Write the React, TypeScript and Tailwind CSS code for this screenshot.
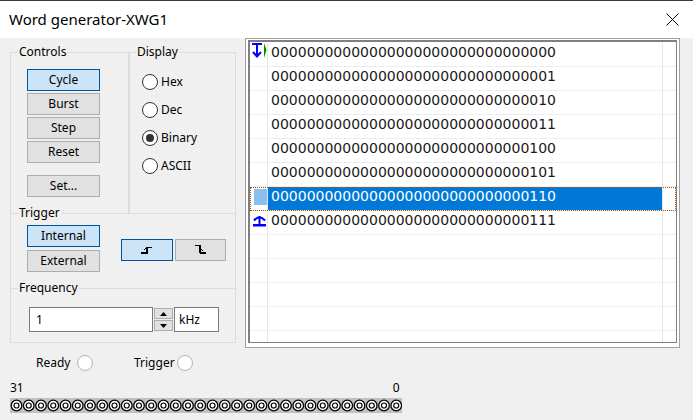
import clsx from "clsx";

const words = Array.from({ length: 8 }, (_, i) => i.toString(2).padStart(32, "0"));

function Button({
  label,
  active = false,
  className,
}: {
  label: React.ReactNode;
  active?: boolean;
  className?: string;
}) {
  return (
    <div
      className={clsx(
        "flex items-center justify-center border text-[12px] leading-none text-black",
        active ? "border-[#005499] bg-[#cce4f7]" : "border-[#adadad] bg-[#e1e1e1]",
        className,
      )}
    >
      {label}
    </div>
  );
}

function Legend({ children, className }: { children: React.ReactNode; className?: string }) {
  return (
    <div
      className={clsx(
        "-mt-[9px] w-fit bg-[#f0f0f0] px-[1px] text-[12px] leading-[16px] text-black",
        className,
      )}
    >
      {children}
    </div>
  );
}

function Radio({ label, checked = false }: { label: string; checked?: boolean }) {
  return (
    <div className="flex h-[28px] items-center">
      <div className="flex h-[16px] w-[16px] items-center justify-center rounded-full border border-[#333333] bg-white">
        {checked && <div className="h-[8px] w-[8px] rounded-full bg-[#333333]" />}
      </div>
      <span className="ml-[3px] text-[12px] leading-none">{label}</span>
    </div>
  );
}

function DownMarker() {
  return (
    <svg width="17" height="23" viewBox="0 0 17 23">
      <rect x="2" y="0" width="10" height="2" fill="#0000ff" />
      <rect x="6" y="2" width="2" height="11" fill="#0000ff" />
      <polyline points="3,9 7,13.5 11,9" fill="none" stroke="#0000ff" strokeWidth="2" />
      <polygon points="14,0 16.5,7 14,15" fill="#008a00" />
    </svg>
  );
}

function UpMarker() {
  return (
    <svg width="17" height="23" viewBox="0 0 17 23">
      <rect x="3" y="13" width="13" height="2.5" fill="#0000ff" />
      <rect x="8.5" y="5" width="2" height="8" fill="#0000ff" />
      <path d="M4 9.5 Q9.5 3 15 9.5" fill="none" stroke="#0000ff" strokeWidth="2" />
    </svg>
  );
}

function RisingEdge() {
  return (
    <svg width="12" height="8" viewBox="0 0 12 8" shapeRendering="crispEdges">
      <rect x="0" y="5" width="6" height="2" fill="#000" />
      <rect x="5" y="0" width="1.5" height="7" fill="#000" />
      <rect x="6" y="0" width="5" height="1" fill="#000" />
      <rect x="3" y="2" width="1" height="1" fill="#000" />
      <rect x="4" y="1" width="1" height="1" fill="#000" />
    </svg>
  );
}

function FallingEdge() {
  return (
    <svg width="12" height="10" viewBox="0 0 12 10" shapeRendering="crispEdges">
      <rect x="0" y="0" width="4" height="1" fill="#000" />
      <rect x="4" y="0" width="1.5" height="8" fill="#000" />
      <rect x="5" y="7" width="6" height="2" fill="#000" />
      <rect x="6" y="4" width="1" height="1" fill="#000" />
      <rect x="7" y="5" width="1" height="1" fill="#000" />
    </svg>
  );
}

function Bits() {
  return (
    <svg width="392" height="15" viewBox="0 0 392 15" className="block bg-[#c0c0c0]">
      {Array.from({ length: 32 }, (_, i) => {
        const cx = 6.5 + i * 12.25;
        return (
          <g key={i}>
            <circle cx={cx} cy="7.5" r="5.3" fill="#fff" stroke="#000" strokeWidth="1.3" />
            <circle cx={cx} cy="7.5" r="2.5" fill="#fff" stroke="#000" strokeWidth="1.2" />
          </g>
        );
      })}
    </svg>
  );
}

export default function App() {
  const rows = Array.from({ length: 13 }, (_, i) => i);

  return (
    <div className="h-[420px] w-[693px] overflow-hidden bg-[#f0f0f0] font-['Noto_Sans','Open_Sans',sans-serif] text-black">
      {/* title bar */}
      <div className="flex h-[38px] items-center border-t border-[#3a3a3a] bg-white pl-[9px] pr-[14px]">
        <span className="text-[15px] leading-none">Word generator-XWG1</span>
        <svg width="13" height="13" viewBox="0 0 13 13" className="ml-auto">
          <path d="M0.5 0.5 L12.5 12.5 M12.5 0.5 L0.5 12.5" stroke="#000" strokeWidth="1" />
        </svg>
      </div>

      <div className="flex items-start">
        {/* left controls */}
        <div className="ml-[10px] mt-[14px] flex h-[291px] w-[226px] flex-col border border-[#dcdcdc]">
          <div className="flex h-[160px]">
            <div className="w-[118px] border-r border-[#dcdcdc]">
              <Legend className="ml-[7px]">Controls</Legend>
              <div className="ml-[16px] mt-[9px] flex w-[73px] flex-col gap-[2px]">
                <Button label="Cycle" active className="h-[22px]" />
                <Button label="Burst" className="h-[22px]" />
                <Button label="Step" className="h-[22px]" />
                <Button label="Reset" className="h-[22px]" />
                <Button label="Set..." className="mt-[10px] h-[22px]" />
              </div>
            </div>
            <div className="flex-1 border-l border-[#dcdcdc]">
              <Legend className="ml-[6px]">Display</Legend>
              <div className="ml-[12px] mt-[8px] flex flex-col">
                <Radio label="Hex" />
                <Radio label="Dec" />
                <Radio label="Binary" checked />
                <Radio label="ASCII" />
              </div>
            </div>
          </div>

          <div className="h-[75px] border-t border-[#dcdcdc]">
            <Legend className="ml-[7px]">Trigger</Legend>
            <div className="mt-[4px] flex items-center">
              <div className="ml-[16px] flex w-[73px] flex-col gap-[3px]">
                <Button label="Internal" active className="h-[22px]" />
                <Button label="External" className="h-[22px]" />
              </div>
              <div className="ml-[21px] mt-[3px] flex gap-[2px]">
                <Button label={<RisingEdge />} active className="h-[22px] w-[52px] pt-[1px]" />
                <Button label={<FallingEdge />} className="h-[22px] w-[51px]" />
              </div>
            </div>
          </div>

          <div className="flex-1 border-t border-[#dcdcdc]">
            <Legend className="ml-[7px]">Frequency</Legend>
            <div className="ml-[18px] mt-[11px] flex items-start">
              <div className="flex h-[25px] w-[124px] items-center border border-[#7a7a7a] bg-white pl-[6px] text-[12px]">
                1
              </div>
              <div className="ml-[1px] mt-[1px] flex w-[19px] flex-col gap-[1px]">
                <div className="flex h-[11px] items-center justify-center border border-[#adadad] bg-[#e1e1e1]">
                  <svg width="7" height="4" viewBox="0 0 7 4">
                    <polygon points="0,4 3.5,0 7,4" fill="#000" />
                  </svg>
                </div>
                <div className="flex h-[11px] items-center justify-center border border-[#adadad] bg-[#e1e1e1]">
                  <svg width="7" height="4" viewBox="0 0 7 4">
                    <polygon points="0,0 3.5,4 7,0" fill="#000" />
                  </svg>
                </div>
              </div>
              <div className="ml-[1px] flex h-[25px] w-[45px] items-center border border-[#7a7a7a] bg-white pl-[4px] text-[12px]">
                kHz
              </div>
            </div>
          </div>
        </div>

        {/* word grid */}
        <div className="ml-[9px] h-[310px] w-[435px] border border-[#a0a0a0] bg-white pb-[4px] pl-[2px] pr-[2px] pt-[1px]">
          <div className="h-full overflow-hidden border-b border-l-2 border-r border-t-2 border-[#808080] bg-white pt-[1px] font-['DejaVu_Sans',sans-serif] text-[14px]">
            {rows.map((i) => {
              const selected = i === 6;
              return (
                <div
                  key={i}
                  className={clsx(
                    "flex h-[24px] border-b border-[#efefef]",
                    selected && "outline-1 -outline-offset-1 outline-dotted outline-[#a85800]",
                  )}
                >
                  <div className="w-[18px] shrink-0 border-r border-[#e6e6e6]">
                    {i === 0 && <DownMarker />}
                    {i === 7 && <UpMarker />}
                    {selected && <div className="ml-[4px] mt-[2px] h-[16px] w-[13px] bg-[#8ac0ee]" />}
                  </div>
                  <div
                    className={clsx(
                      "w-[395px] shrink-0 border-r border-[#e6e6e6] pl-[3px] pt-[1px] leading-[16px]",
                      selected ? "bg-[#0078d7] text-white" : "text-[#1a1a1a]",
                    )}
                  >
                    {words[i] ?? ""}
                  </div>
                  <div className="flex-1" />
                </div>
              );
            })}
          </div>
        </div>
      </div>

      {/* status */}
      <div className="mt-[7px] flex h-[16px] items-center text-[12px]">
        <span className="ml-[36px] w-[41px] leading-none">Ready</span>
        <div className="h-[16px] w-[16px] rounded-full border border-[#b4b4b4] bg-white" />
        <span className="ml-[41px] w-[43px] leading-none">Trigger</span>
        <div className="h-[16px] w-[16px] rounded-full border border-[#b4b4b4] bg-white" />
      </div>

      <div className="mt-[9px] flex h-[16px] items-center text-[12px] leading-none">
        <span className="ml-[10px]">31</span>
        <span className="ml-[369px]">0</span>
      </div>
      <div className="ml-[10px] mt-[2px]">
        <Bits />
      </div>
    </div>
  );
}
